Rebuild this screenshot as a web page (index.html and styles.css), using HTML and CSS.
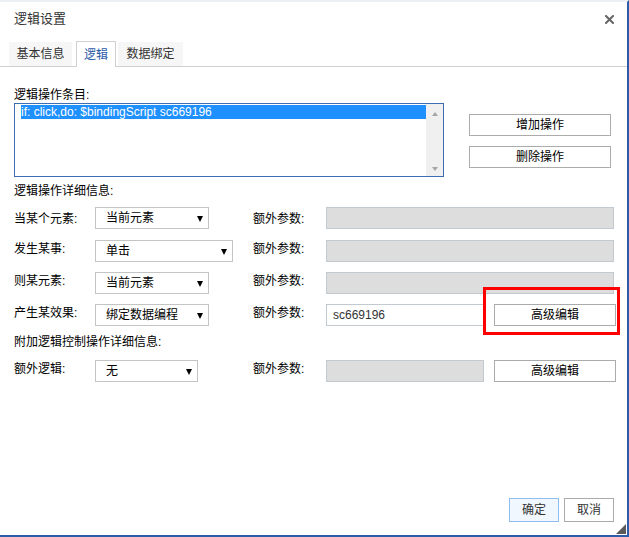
FILE: index.html
```html
<!DOCTYPE html>
<html lang="zh">
<head>
<meta charset="utf-8">
<title>逻辑设置</title>
<link rel="stylesheet" href="styles.css">
</head>
<body>
<div class="dialog">
  <div class="titlebar">
    <span class="title">逻辑设置</span>
    <svg class="close" width="9" height="9" viewBox="0 0 9 9"><path d="M1 1L8 8M8 1L1 8" stroke="#666" stroke-width="2" stroke-linecap="square"/></svg>
  </div>
  <div class="tabs">
    <div class="tab t1">基本信息</div>
    <div class="tab t2 active">逻辑</div>
    <div class="tab t3">数据绑定</div>
  </div>
  <div class="content">
    <div class="label sec1">逻辑操作条目:</div>
    <div class="list-row">
      <div class="listbox">
        <div class="items">
          <div class="item selected">if: click,do: $bindingScript sc669196</div>
        </div>
        <div class="scrollbar">
          <span class="arr up"></span>
          <span class="arr down"></span>
        </div>
      </div>
      <div class="side-buttons">
        <div class="btn">增加操作</div>
        <div class="btn">删除操作</div>
      </div>
    </div>
    <div class="label sec2">逻辑操作详细信息:</div>
    <div class="row r1">
      <div class="lbl">当某个元素:</div>
      <div class="cell"><div class="select w114">当前元素<span class="caret"></span></div></div>
      <div class="lbl">额外参数:</div>
      <div class="input disabled wide"></div>
    </div>
    <div class="row r2">
      <div class="lbl">发生某事:</div>
      <div class="cell"><div class="select w138">单击<span class="caret"></span></div></div>
      <div class="lbl">额外参数:</div>
      <div class="input disabled wide"></div>
    </div>
    <div class="row r3">
      <div class="lbl">则某元素:</div>
      <div class="cell"><div class="select w114">当前元素<span class="caret"></span></div></div>
      <div class="lbl">额外参数:</div>
      <div class="input disabled wide"></div>
    </div>
    <div class="row r4">
      <div class="lbl">产生某效果:</div>
      <div class="cell"><div class="select w114">绑定数据编程<span class="caret"></span></div></div>
      <div class="lbl">额外参数:</div>
      <div class="pair">
        <div class="input short">sc669196</div>
        <div class="btn adv">高级编辑</div>
      </div>
      <div class="mark"></div>
    </div>
    <div class="label sec3">附加逻辑控制操作详细信息:</div>
    <div class="row r5">
      <div class="lbl">额外逻辑:</div>
      <div class="cell"><div class="select w103">无<span class="caret"></span></div></div>
      <div class="lbl">额外参数:</div>
      <div class="pair">
        <div class="input disabled short"></div>
        <div class="btn adv">高级编辑</div>
      </div>
    </div>
  </div>
  <div class="footer">
    <div class="btn fbtn primary">确定</div>
    <div class="btn fbtn">取消</div>
  </div>
  <div class="grip"></div>
</div>
</body>
</html>
```
FILE: styles.css
```css
* { box-sizing: border-box; }
html, body { margin: 0; padding: 0; background: #fff; }
body {
  font-family: "Liberation Sans", "Noto Sans CJK SC", sans-serif;
  font-size: 12px;
  color: #000;
}
.dialog {
  position: relative;
  width: 629px;
  height: 537px;
  border-top: 2px solid #edf1f5;
  border-right: 2px solid #2d5ca8;
  border-bottom: 2px solid #2d5ca8;
  display: flex;
  flex-direction: column;
  background: #fff;
}
.titlebar {
  height: 33px;
  display: flex;
  align-items: center;
  justify-content: space-between;
  padding: 0 13px 0 14px;
}
.title { font-size: 13px; color: #333; line-height: 16px; }
.close { display: block; margin-top: 1px; }

.tabs {
  margin-top: 6px;
  height: 26px;
  display: flex;
  align-items: flex-end;
  padding-left: 9px;
  border-bottom: 1px solid #d0d0d0;
}
.tab {
  height: 24px;
  display: flex;
  align-items: center;
  justify-content: center;
  color: #333;
  background: #f6f6f6;
  line-height: 16px;
}
.t1 { width: 63px; margin-right: 4px; }
.t2 { width: 40px; margin-right: 2px; }
.t3 { width: 65px; }
.tab.active {
  height: 26px;
  margin-bottom: -1px;
  background: #fff;
  color: #2a5aa8;
  border: 1px solid #d0d0d0;
  border-bottom: none;
}

.content { padding: 0 11px 0 14px; }
.label { line-height: 16px; height: 16px; }
.sec1 { margin-top: 20px; }
.sec2 { margin-top: 6px; }
.sec3 { margin-top: 8px; }

.list-row { display: flex; align-items: flex-start; }
.listbox {
  width: 430px;
  height: 74px;
  border: 1px solid #3f6db3;
  display: flex;
}
.items { flex: 1; padding: 1px 0 0 6px; }
.item {
  height: 14px;
  line-height: 14px;
  font-size: 12px;
  white-space: nowrap;
}
.item.selected { background: #1e90ff; color: #fff; }
.scrollbar {
  width: 17px;
  background: #f0f0f0;
  display: flex;
  flex-direction: column;
  justify-content: space-between;
  align-items: center;
  padding: 8px 0 5px;
}
.arr { width: 0; height: 0; border-left: 3.5px solid transparent; border-right: 3.5px solid transparent; }
.arr.up { border-bottom: 4px solid #a6a6a6; }
.arr.down { border-top: 4px solid #a6a6a6; }

.side-buttons {
  margin-left: 25px;
  margin-top: 11px;
  width: 142px;
  display: flex;
  flex-direction: column;
  gap: 10px;
}
.btn {
  height: 22px;
  border: 1px solid #ababab;
  background: #fff;
  display: flex;
  align-items: center;
  justify-content: center;
  line-height: 16px;
  color: #000;
}

.row {
  position: relative;
  display: grid;
  grid-template-columns: 81px 158px 73px 290px;
  align-items: start;
  height: 22px;
}
.r1 { margin-top: 8px; }
.r2 { margin-top: 11px; }
.r3, .r4 { margin-top: 10px; }
.r5 { margin-top: 10px; }
.lbl { line-height: 16px; margin-top: 1px; }
.r1 .lbl { margin-top: 4px; }

.select {
  position: relative;
  height: 22px;
  border: 1px solid #c4c4c4;
  background: #fff;
  padding-left: 10px;
  line-height: 20px;
}
.w114 { width: 114px; }
.w138 { width: 138px; }
.w103 { width: 103px; }
.caret {
  position: absolute;
  right: 5px;
  top: 8px;
  width: 0; height: 0;
  border-left: 3px solid transparent;
  border-right: 3px solid transparent;
  border-top: 6px solid #000;
}

.input {
  height: 22px;
  border: 1px solid #c3c9d0;
  background: #fff;
  padding-left: 6px;
  line-height: 20px;
  color: #333;
  font-size: 12px;
}
.input.disabled { background: #dddddd; }
.wide { width: 288px; }
.pair { display: flex; gap: 10px; }
.short { width: 158px; }
.btn.adv { width: 122px; }

.mark {
  position: absolute;
  left: 469px;
  top: -17px;
  width: 137px;
  height: 48px;
  border: 3px solid #f00;
}

.footer {
  margin-top: auto;
  display: flex;
  justify-content: flex-end;
  gap: 5px;
  padding: 0 13px 13px 0;
}
.fbtn { width: 50px; height: 24px; color: #333; }
.fbtn.primary { background: #f1f7ff; border-color: #8fbdf0; }

.grip {
  position: absolute;
  right: 1px;
  bottom: 1px;
  width: 0; height: 0;
  border-left: 10px solid transparent;
  border-bottom: 10px solid #5a5a5a;
}
```
